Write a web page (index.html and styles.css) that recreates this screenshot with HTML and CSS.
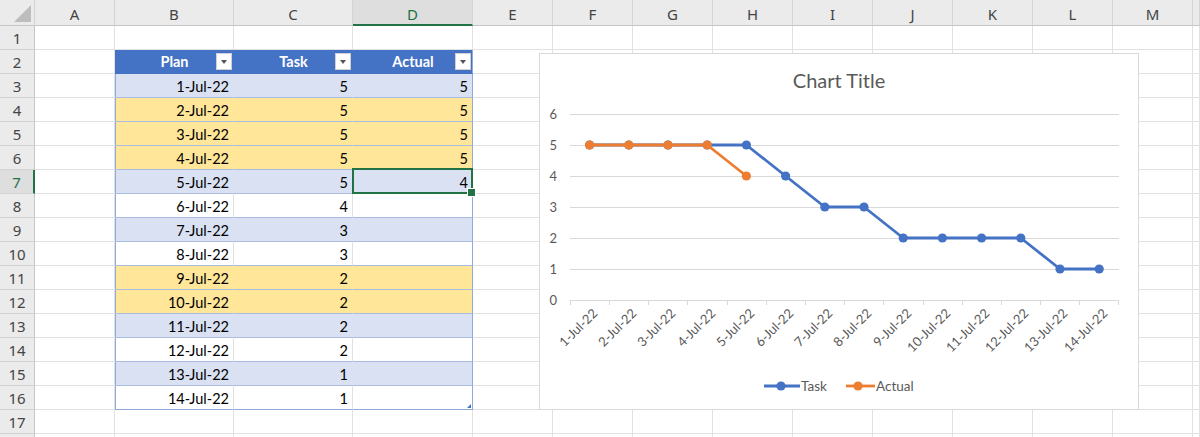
FILE: index.html
```html
<!DOCTYPE html>
<html>
<head>
<meta charset="utf-8">
<link rel="stylesheet" href="styles.css">
</head>
<body>
<div class="sheet">
  <div class="ch corner"></div><div class="ch">A</div><div class="ch">B</div><div class="ch">C</div><div class="ch sel">D</div><div class="ch">E</div><div class="ch">F</div><div class="ch">G</div><div class="ch">H</div><div class="ch">I</div><div class="ch">J</div><div class="ch">K</div><div class="ch">L</div><div class="ch">M</div><div class="ch"></div>

  <div class="rh">1</div><div class="c"></div><div class="c"></div><div class="c"></div><div class="c"></div><div class="c"></div><div class="c"></div><div class="c"></div><div class="c"></div><div class="c"></div><div class="c"></div><div class="c"></div><div class="c"></div><div class="c"></div><div class="c"></div>

  <div class="rh">2</div><div class="c"></div>
  <div class="c th"><span class="hl">Plan</span><span class="filter"></span></div>
  <div class="c th"><span class="hl">Task</span><span class="filter"></span></div>
  <div class="c th tr"><span class="hl">Actual</span><span class="filter"></span></div>
  <div class="c"></div><div class="c"></div><div class="c"></div><div class="c"></div><div class="c"></div><div class="c"></div><div class="c"></div><div class="c"></div><div class="c"></div><div class="c"></div>

  <div class="rh">3</div><div class="c"></div><div class="c t tb tl">1-Jul-22</div><div class="c t tb">5</div><div class="c t tb tr">5</div><div class="c"></div><div class="c"></div><div class="c"></div><div class="c"></div><div class="c"></div><div class="c"></div><div class="c"></div><div class="c"></div><div class="c"></div><div class="c"></div>

  <div class="rh">4</div><div class="c"></div><div class="c t ty tl">2-Jul-22</div><div class="c t ty">5</div><div class="c t ty tr">5</div><div class="c"></div><div class="c"></div><div class="c"></div><div class="c"></div><div class="c"></div><div class="c"></div><div class="c"></div><div class="c"></div><div class="c"></div><div class="c"></div>

  <div class="rh">5</div><div class="c"></div><div class="c t ty tl">3-Jul-22</div><div class="c t ty">5</div><div class="c t ty tr">5</div><div class="c"></div><div class="c"></div><div class="c"></div><div class="c"></div><div class="c"></div><div class="c"></div><div class="c"></div><div class="c"></div><div class="c"></div><div class="c"></div>

  <div class="rh">6</div><div class="c"></div><div class="c t ty tl">4-Jul-22</div><div class="c t ty">5</div><div class="c t ty tr">5</div><div class="c"></div><div class="c"></div><div class="c"></div><div class="c"></div><div class="c"></div><div class="c"></div><div class="c"></div><div class="c"></div><div class="c"></div><div class="c"></div>

  <div class="rh rsel">7</div><div class="c"></div><div class="c t tb tl">5-Jul-22</div><div class="c t tb">5</div><div class="c t tb tr active">4</div><div class="c"></div><div class="c"></div><div class="c"></div><div class="c"></div><div class="c"></div><div class="c"></div><div class="c"></div><div class="c"></div><div class="c"></div><div class="c"></div>

  <div class="rh">8</div><div class="c"></div><div class="c t tw tl">6-Jul-22</div><div class="c t tw">4</div><div class="c t tw tr"></div><div class="c"></div><div class="c"></div><div class="c"></div><div class="c"></div><div class="c"></div><div class="c"></div><div class="c"></div><div class="c"></div><div class="c"></div><div class="c"></div>

  <div class="rh">9</div><div class="c"></div><div class="c t tb tl">7-Jul-22</div><div class="c t tb">3</div><div class="c t tb tr"></div><div class="c"></div><div class="c"></div><div class="c"></div><div class="c"></div><div class="c"></div><div class="c"></div><div class="c"></div><div class="c"></div><div class="c"></div><div class="c"></div>

  <div class="rh">10</div><div class="c"></div><div class="c t tw tl">8-Jul-22</div><div class="c t tw">3</div><div class="c t tw tr"></div><div class="c"></div><div class="c"></div><div class="c"></div><div class="c"></div><div class="c"></div><div class="c"></div><div class="c"></div><div class="c"></div><div class="c"></div><div class="c"></div>

  <div class="rh">11</div><div class="c"></div><div class="c t ty tl">9-Jul-22</div><div class="c t ty">2</div><div class="c t ty tr"></div><div class="c"></div><div class="c"></div><div class="c"></div><div class="c"></div><div class="c"></div><div class="c"></div><div class="c"></div><div class="c"></div><div class="c"></div><div class="c"></div>

  <div class="rh">12</div><div class="c"></div><div class="c t ty tl">10-Jul-22</div><div class="c t ty">2</div><div class="c t ty tr"></div><div class="c"></div><div class="c"></div><div class="c"></div><div class="c"></div><div class="c"></div><div class="c"></div><div class="c"></div><div class="c"></div><div class="c"></div><div class="c"></div>

  <div class="rh">13</div><div class="c"></div><div class="c t tb tl">11-Jul-22</div><div class="c t tb">2</div><div class="c t tb tr"></div><div class="c"></div><div class="c"></div><div class="c"></div><div class="c"></div><div class="c"></div><div class="c"></div><div class="c"></div><div class="c"></div><div class="c"></div><div class="c"></div>

  <div class="rh">14</div><div class="c"></div><div class="c t tw tl">12-Jul-22</div><div class="c t tw">2</div><div class="c t tw tr"></div><div class="c"></div><div class="c"></div><div class="c"></div><div class="c"></div><div class="c"></div><div class="c"></div><div class="c"></div><div class="c"></div><div class="c"></div><div class="c"></div>

  <div class="rh">15</div><div class="c"></div><div class="c t tb tl">13-Jul-22</div><div class="c t tb">1</div><div class="c t tb tr"></div><div class="c"></div><div class="c"></div><div class="c"></div><div class="c"></div><div class="c"></div><div class="c"></div><div class="c"></div><div class="c"></div><div class="c"></div><div class="c"></div>

  <div class="rh">16</div><div class="c"></div><div class="c t tw tl tend">14-Jul-22</div><div class="c t tw tend">1</div><div class="c t tw tr tend resize"></div><div class="c"></div><div class="c"></div><div class="c"></div><div class="c"></div><div class="c"></div><div class="c"></div><div class="c"></div><div class="c"></div><div class="c"></div><div class="c"></div>

  <div class="rh">17</div><div class="c"></div><div class="c"></div><div class="c"></div><div class="c"></div><div class="c"></div><div class="c"></div><div class="c"></div><div class="c"></div><div class="c"></div><div class="c"></div><div class="c"></div><div class="c"></div><div class="c"></div><div class="c"></div>

  <div class="rh"></div><div class="c"></div><div class="c"></div><div class="c"></div><div class="c"></div><div class="c"></div><div class="c"></div><div class="c"></div><div class="c"></div><div class="c"></div><div class="c"></div><div class="c"></div><div class="c"></div><div class="c"></div><div class="c"></div>
</div>

<div class="chart">
  <svg width="600" height="357" viewBox="0 0 600 357" xmlns="http://www.w3.org/2000/svg">
    <text class="title" x="300" y="35">Chart Title</text>
    <g class="grid">
      <line x1="31" y1="61.5" x2="580" y2="61.5"/>
      <line x1="31" y1="92.5" x2="580" y2="92.5"/>
      <line x1="31" y1="123.5" x2="580" y2="123.5"/>
      <line x1="31" y1="154.5" x2="580" y2="154.5"/>
      <line x1="31" y1="185.5" x2="580" y2="185.5"/>
      <line x1="31" y1="216.5" x2="580" y2="216.5"/>
      <line x1="31" y1="247.5" x2="580" y2="247.5"/>
    </g>
    <g class="grid">
      <line x1="31.5" y1="247" x2="31.5" y2="252"/>
      <line x1="70.5" y1="247" x2="70.5" y2="252"/>
      <line x1="109.5" y1="247" x2="109.5" y2="252"/>
      <line x1="148.5" y1="247" x2="148.5" y2="252"/>
      <line x1="188.5" y1="247" x2="188.5" y2="252"/>
      <line x1="227.5" y1="247" x2="227.5" y2="252"/>
      <line x1="266.5" y1="247" x2="266.5" y2="252"/>
      <line x1="305.5" y1="247" x2="305.5" y2="252"/>
      <line x1="344.5" y1="247" x2="344.5" y2="252"/>
      <line x1="384.5" y1="247" x2="384.5" y2="252"/>
      <line x1="423.5" y1="247" x2="423.5" y2="252"/>
      <line x1="462.5" y1="247" x2="462.5" y2="252"/>
      <line x1="501.5" y1="247" x2="501.5" y2="252"/>
      <line x1="540.5" y1="247" x2="540.5" y2="252"/>
      <line x1="579.5" y1="247" x2="579.5" y2="252"/>
    </g>
    <g class="ylab">
      <text x="18" y="66">6</text>
      <text x="18" y="97">5</text>
      <text x="18" y="128">4</text>
      <text x="18" y="159">3</text>
      <text x="18" y="190">2</text>
      <text x="18" y="221">1</text>
      <text x="18" y="252">0</text>
    </g>
    <g class="xlab">
      <text transform="translate(56,258) rotate(-45)" dy="0.35em">1-Jul-22</text>
      <text transform="translate(95,258) rotate(-45)" dy="0.35em">2-Jul-22</text>
      <text transform="translate(134,258) rotate(-45)" dy="0.35em">3-Jul-22</text>
      <text transform="translate(174,258) rotate(-45)" dy="0.35em">4-Jul-22</text>
      <text transform="translate(213,258) rotate(-45)" dy="0.35em">5-Jul-22</text>
      <text transform="translate(252,258) rotate(-45)" dy="0.35em">6-Jul-22</text>
      <text transform="translate(291,258) rotate(-45)" dy="0.35em">7-Jul-22</text>
      <text transform="translate(330,258) rotate(-45)" dy="0.35em">8-Jul-22</text>
      <text transform="translate(370,258) rotate(-45)" dy="0.35em">9-Jul-22</text>
      <text transform="translate(409,258) rotate(-45)" dy="0.35em">10-Jul-22</text>
      <text transform="translate(448,258) rotate(-45)" dy="0.35em">11-Jul-22</text>
      <text transform="translate(487,258) rotate(-45)" dy="0.35em">12-Jul-22</text>
      <text transform="translate(526,258) rotate(-45)" dy="0.35em">13-Jul-22</text>
      <text transform="translate(566,258) rotate(-45)" dy="0.35em">14-Jul-22</text>
    </g>
    <g class="task">
      <polyline points="50.6,92 89.8,92 129,92 168.2,92 207.4,92 246.6,123 285.8,154 325,154 364.2,185 403.4,185 442.6,185 481.8,185 521,216 560.2,216"/>
      <circle cx="50.6" cy="92" r="4.6"/><circle cx="89.8" cy="92" r="4.6"/><circle cx="129" cy="92" r="4.6"/><circle cx="168.2" cy="92" r="4.6"/><circle cx="207.4" cy="92" r="4.6"/><circle cx="246.6" cy="123" r="4.6"/><circle cx="285.8" cy="154" r="4.6"/><circle cx="325" cy="154" r="4.6"/><circle cx="364.2" cy="185" r="4.6"/><circle cx="403.4" cy="185" r="4.6"/><circle cx="442.6" cy="185" r="4.6"/><circle cx="481.8" cy="185" r="4.6"/><circle cx="521" cy="216" r="4.6"/><circle cx="560.2" cy="216" r="4.6"/>
    </g>
    <g class="actual">
      <polyline points="50.6,92 89.8,92 129,92 168.2,92 207.4,123"/>
      <circle cx="50.6" cy="92" r="4.6"/><circle cx="89.8" cy="92" r="4.6"/><circle cx="129" cy="92" r="4.6"/><circle cx="168.2" cy="92" r="4.6"/><circle cx="207.4" cy="123" r="4.6"/>
    </g>
    <g class="task">
      <line x1="225" y1="333" x2="261" y2="333"/>
      <circle cx="242" cy="333" r="4.6"/>
    </g>
    <text class="leg" x="262" y="338">Task</text>
    <g class="actual">
      <line x1="307" y1="333" x2="336" y2="333"/>
      <circle cx="319" cy="333" r="4.6"/>
    </g>
    <text class="leg" x="337" y="338">Actual</text>
  </svg>
</div>
</body>
</html>
```

FILE: styles.css
```css
* { box-sizing: border-box; }
html, body { margin: 0; padding: 0; background: #ffffff; }
body {
  width: 1200px;
  height: 437px;
  overflow: hidden;
  position: relative;
  font-family: Lato, "Liberation Sans", sans-serif;
}

.sheet {
  display: grid;
  grid-template-columns: 35px 80px 119px 119px 120px repeat(9, 80px) 1fr;
  grid-template-rows: 26px repeat(18, 24px);
}

.ch {
  background: #ebebeb;
  border-right: 1px solid #d4d4d4;
  border-bottom: 1px solid #c6c6c6;
  font-family: "Noto Sans", "Open Sans", sans-serif;
  font-size: 15px;
  color: #444444;
  display: flex;
  align-items: center;
  justify-content: center;
  padding-top: 3px;
}
.ch.sel {
  background: #dedede;
  color: #217346;
  border-bottom: 2px solid #217346;
}
.corner { position: relative; }
.corner::after {
  content: "";
  position: absolute;
  right: 3px;
  bottom: 3px;
  width: 0;
  height: 0;
  border-left: 17px solid transparent;
  border-bottom: 17px solid #bdbdbd;
}

.rh {
  background: #ebebeb;
  border-right: 1px solid #c6c6c6;
  border-bottom: 1px solid #d4d4d4;
  font-family: "Noto Sans", "Open Sans", sans-serif;
  font-size: 15px;
  color: #444444;
  display: flex;
  align-items: center;
  justify-content: center;
  padding-top: 1px;
}
.rh.rsel {
  background: #dedede;
  color: #217346;
  border-right: 2px solid #217346;
}

.c {
  border-right: 1px solid #e1e1e1;
  border-bottom: 1px solid #e1e1e1;
  font-size: 14.5px;
  color: #000000;
  display: flex;
  align-items: center;
  justify-content: flex-end;
  padding-right: 4px;
  padding-top: 1px;
  white-space: nowrap;
}

.th {
  background: #4472c4;
  border-right-color: #4472c4;
  border-bottom-color: #4472c4;
  color: #ffffff;
  font-weight: bold;
  padding: 0 1px 0 18px;
}
.th .hl { flex: 1; text-align: center; }
.filter {
  width: 16px;
  height: 17px;
  background: #ffffff;
  border: 1px solid #d0d0d0;
  display: flex;
  align-items: center;
  justify-content: center;
}
.filter::after {
  content: "";
  width: 0;
  height: 0;
  border-left: 3.5px solid transparent;
  border-right: 3.5px solid transparent;
  border-top: 4px solid #555555;
  margin-top: 1px;
}

.t { border-bottom: 1px solid #a9bde3; }
.tb { background: #d9e1f2; border-right-color: #d9e1f2; }
.ty { background: #ffe699; border-right-color: #ffe699; }
.tw { background: #ffffff; }
.tl { box-shadow: inset 1px 0 0 #8ea9db; }
.tr { border-right: 1px solid #8ea9db; }
.tend { border-bottom: 1px solid #8ea9db; }

.active { position: relative; }
.active::before {
  content: "";
  position: absolute;
  top: -2px;
  left: -1px;
  right: -1px;
  bottom: -1px;
  border: 2px solid #217346;
}
.active::after {
  content: "";
  position: absolute;
  right: -4px;
  bottom: -4px;
  width: 7px;
  height: 7px;
  background: #217346;
  border: 1px solid #ffffff;
}

.resize { position: relative; }
.resize::after {
  content: "";
  position: absolute;
  right: 1px;
  bottom: 1px;
  width: 0;
  height: 0;
  border-left: 4px solid transparent;
  border-bottom: 4px solid #4472c4;
}

.chart {
  position: absolute;
  left: 539px;
  top: 53px;
  width: 600px;
  height: 357px;
  background: #ffffff;
  border: 1px solid #d9d9d9;
}
.chart svg { display: block; position: absolute; left: -1px; top: -1px; }

.title {
  font-family: Lato, "Liberation Sans", sans-serif;
  font-size: 20px;
  fill: #595959;
  text-anchor: middle;
}
.grid line { stroke: #d9d9d9; stroke-width: 1; }
.ylab text {
  font-family: Lato, "Liberation Sans", sans-serif;
  font-size: 13px;
  fill: #595959;
  text-anchor: end;
}
.xlab text {
  font-family: Lato, "Liberation Sans", sans-serif;
  font-size: 13px;
  fill: #595959;
  text-anchor: end;
}
.task polyline, .task line { fill: none; stroke: #4472c4; stroke-width: 2.8; stroke-linejoin: round; }
.task circle { fill: #4472c4; }
.actual polyline, .actual line { fill: none; stroke: #ed7d31; stroke-width: 2.8; stroke-linejoin: round; }
.actual circle { fill: #ed7d31; }
.leg {
  font-family: Lato, "Liberation Sans", sans-serif;
  font-size: 13.5px;
  fill: #595959;
}
```
